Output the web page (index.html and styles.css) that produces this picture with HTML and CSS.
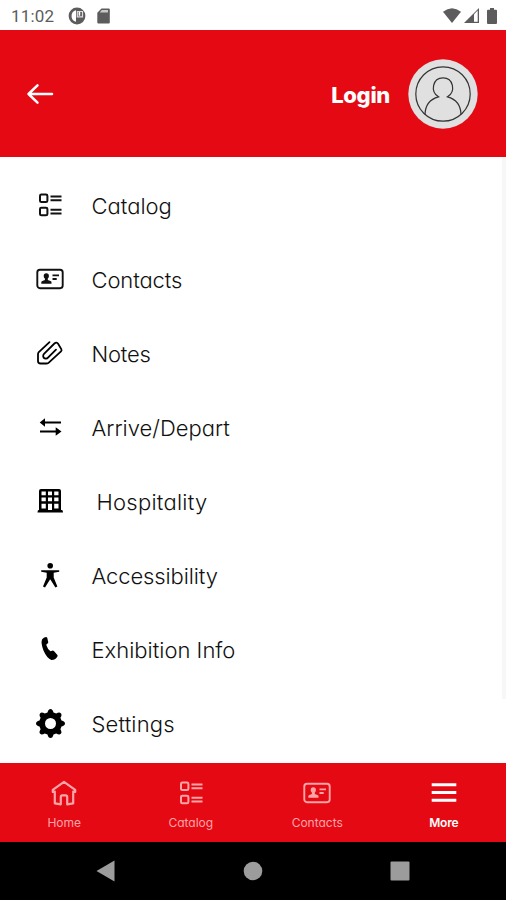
FILE: index.html
```html
<!DOCTYPE html>
<html lang="en">
<head>
<meta charset="utf-8">
<title>More</title>
<link rel="stylesheet" href="styles.css">
</head>
<body>
<svg class="defs" width="0" height="0" aria-hidden="true">
  <symbol id="catalog" viewBox="0 0 28 28">
    <g fill="none" stroke="currentColor" stroke-width="2">
      <rect x="4" y="3.5" width="7.400" height="7.600" rx="1.400"/>
      <rect x="4" y="16.700" width="7.400" height="7.600" rx="1.400"/>
      <path d="M14.500 5.500h11M14.500 9.300h11M14.500 18.700h11M14.500 22.500h11"/>
    </g>
  </symbol>
  <symbol id="card" viewBox="0 0 28 28">
    <rect x="1.300" y="4.800" width="25.400" height="18.400" rx="2.600" fill="none" stroke="currentColor" stroke-width="1.900"/>
    <path fill="currentColor" d="M7.700 10.800a2.600 2.600 0 0 1 5.200 0c0 1.300-.4 2.200-1.100 2.800v1.500l2.600.9c.9.3 1.100.8 1.100 1.600v1.200H5.300v-1.200c0-.8.3-1.300 1.100-1.600l2.500-.9v-1.500c-.8-.6-1.200-1.500-1.200-2.800z"/>
    <path d="M16.500 10.400H23M16.500 14h4.200" fill="none" stroke="currentColor" stroke-width="1.900"/>
  </symbol>
</svg>

<header class="status">
  <span class="clock">11:02</span>
  <svg class="status-disc" width="18" height="18" viewBox="0 0 18 18"><circle cx="9" cy="9" r="8.400" fill="#5c5c5c"/><path d="M8 3.200a6 6 0 0 0 0 11.600zM10.600 4.200h1.600v4.600h-1.600z" fill="#fff"/><path d="M9.300 4.500h5.200v5.300H9.300z" fill="none" stroke="#ddd" stroke-width="1.200"/></svg>
  <svg class="status-sd" width="13" height="16" viewBox="0 0 13 16"><path d="M4.500.5h7.200q1.100 0 1.100 1.100v12.800q0 1.100-1.100 1.100H1.400Q.3 15.500.3 14.400V4.800z" fill="#5c5c5c"/><path d="M4.800 2.100h6.200v2.300H2.700z" fill="#c8c8c8"/></svg>
  <div class="status-right">
    <svg width="18" height="15" viewBox="0 0 18 15"><path d="M9 15 0 3.700q9-7 18 0z" fill="#5c5c5c"/></svg>
    <svg width="15" height="15" viewBox="0 0 15 15"><path d="M15 0v15H0z" fill="#5c5c5c"/><path d="M10 6.300 13.700 2.600v11.100H10z" fill="#fff"/></svg>
    <svg class="battery" width="10" height="16" viewBox="0 0 10 16"><path d="M3 0h4v1.700h2q1 0 1 1V15q0 1-1 1H1q-1 0-1-1V2.700q0-1 1-1h2z" fill="#5c5c5c"/></svg>
  </div>
</header>

<section class="banner">
  <svg class="back" width="28" height="22" viewBox="0 0 28 22"><path d="M26 11H2.500M11.500 2.300 2.500 11l9 8.700" fill="none" stroke="#fff" stroke-width="2.500" stroke-linecap="round" stroke-linejoin="round"/></svg>
  <span class="login">Login</span>
  <svg class="avatar" width="70" height="70" viewBox="0 0 70 70">
    <circle cx="35" cy="35" r="34.700" fill="#e0e0e0"/>
    <g fill="none" stroke="#333" stroke-width="1.200"><circle cx="35" cy="35" r="27.200"/><path d="M17 55.500C17.200 46 22.500 40 30.500 37.800 22 32.500 24.500 18.800 35 18.800s13 13.700 4.500 19C47.500 40 52.800 46 53 55.500"/></g>
  </svg>
</section>

<main class="content">
  <ul class="menu">
    <li class="row"><svg class="icon"><use href="#catalog"/></svg><span class="t-catalog">Catalog</span></li>
    <li class="row"><svg class="icon"><use href="#card"/></svg><span class="t-contacts">Contacts</span></li>
    <li class="row"><svg class="icon" viewBox="0 0 28 28"><path d="M13.500 3.200 2.800 13.200q-.8.800-.8 2V22q0 2.500 2.500 2.500h6.300q1.200 0 2-.8L25 12.300q1-1 .3-2.200l-3.200-5.400q-1.500-2.200-3.700-.2L8 14.800q-1 1-.8 2.500.4 2.500 3 2.200 1 0 1.800-.9l8-8" fill="none" stroke="#000" stroke-width="1.800" stroke-linecap="round"/></svg><span class="t-notes">Notes</span></li>
    <li class="row"><svg class="icon" viewBox="0 0 28 28"><path d="M7 9.500h18M4 18.500H21" fill="none" stroke="#000" stroke-width="1.900"/><path d="M3.700 9.500 9 5.300v8.400zM25.500 18.500l-5.800-4.200v8.400z"/></svg><span class="t-arrive">Arrive/Depart</span></li>
    <li class="row"><svg class="icon" viewBox="0 0 28 28"><path fill-rule="evenodd" d="M5 2h18q2 0 2 2v19h1q1 0 1 2.500H1.500Q1.500 23 2.500 23H3V4q0-2 2-2zM5.500 4.500v3.800h4.300V4.500zM12 4.500v3.800h4V4.500zM18.200 4.500v3.800h4.300V4.500zM5.500 10.500v3.800h4.300v-3.800zM12 10.500v3.800h4v-3.800zM18.200 10.500v3.800h4.300v-3.800zM5.500 16.700v4.800h4.300v-4.800zM12 16.700V23h4v-6.300zM18.200 16.700v4.800h4.300v-4.800z"/></svg><span class="t-hospitality">Hospitality</span></li>
    <li class="row"><svg class="icon" viewBox="0 0 28 28"><circle cx="14.200" cy="4.700" r="2.800"/><path d="M5.200 9.200h18v1.600l-5.500 1v4.700l3.700 9-2 .9-5-8h-.4l-5 8-2-.9 3.700-9v-4.700l-5.500-1z"/></svg><span class="t-access">Accessibility</span></li>
    <li class="row"><svg class="icon" viewBox="0 0 28 28"><path d="M6 4.600q1.500-2.300 4-2.600 1 0 1.300 1l.9 4q.2 1-.7 1.600l-1.300 1.100q1.200 4.300 4.300 6.600l1.700-.6q1-.4 1.700.4l3.500 4q.6.900-.2 1.700-2 3.400-5.800 3.200Q11 23.500 7.500 15.500 4.700 8.500 6 4.600z"/></svg><span class="t-info">Exhibition Info</span></li>
    <li class="row"><svg class="icon gear" viewBox="-14.500 -14.500 29 29"><path fill-rule="evenodd" d="M-3-11Q-2.200-14.500 0-14.500T3-11L5.700-9.900Q8.700-11.800 10.300-10.300T9.900-5.700L11-3Q14.500-2.200 14.500 0T11 3L9.900 5.700Q11.800 8.700 10.300 10.300T5.700 9.900L3 11Q2.200 14.500 0 14.500T-3 11L-5.700 9.900Q-8.700 11.800-10.300 10.300T-9.900 5.700L-11 3Q-14.500 2.200-14.500 0T-11-3L-9.900-5.700Q-11.800-8.700-10.300-10.300T-5.700-9.900zM5.500 0a5.500 5.500 0 1 0-11 0 5.500 5.500 0 1 0 11 0z"/></svg><span class="t-settings">Settings</span></li>
  </ul>
  <div class="rail"></div>
</main>

<nav class="tabs">
  <a class="tab"><svg class="icon" viewBox="0 0 28 28"><path d="M2.800 13V10.800L14 2.800l11.200 8V13l-2-.5v11.800l-6 1v-7.500q0-1.500-1.500-1.500h-3.400q-1.500 0-1.500 1.500v7.500l-6-1V12.500z" fill="none" stroke="currentColor" stroke-width="2.200" stroke-linejoin="round"/></svg><span>Home</span></a>
  <a class="tab"><svg class="icon"><use href="#catalog"/></svg><span>Catalog</span></a>
  <a class="tab"><svg class="icon"><use href="#card"/></svg><span>Contacts</span></a>
  <a class="tab active"><svg class="icon" viewBox="0 0 28 28"><path d="M1.700 5.700h24.600M1.700 13.500h24.600M1.700 21.300h24.600" stroke="currentColor" stroke-width="3"/></svg><span>More</span></a>
</nav>

<footer class="system">
  <svg width="20" height="22" viewBox="0 0 20 22"><path d="M18.500.5v21L.5 11z" fill="#9c9c9c"/></svg>
  <svg width="20" height="20" viewBox="0 0 20 20"><circle cx="10" cy="10" r="9.300" fill="#9c9c9c"/></svg>
  <svg width="20" height="20" viewBox="0 0 20 20"><rect x=".5" y=".5" width="19" height="19" rx="1" fill="#9c9c9c"/></svg>
</footer>
</body>
</html>
```
FILE: styles.css
```css
* { box-sizing: border-box; }
body {
  margin: 0;
  width: 506px;
  height: 900px;
  display: flex;
  flex-direction: column;
  overflow: hidden;
  background: #fff;
  font-family: Inter, "Liberation Sans", sans-serif;
  font-feature-settings: "cv11";
}
svg { display: block; flex: none; }
.defs { position: absolute; }

.status {
  height: 30px;
  flex: none;
  display: flex;
  align-items: center;
  padding: 1px 9px 0 11px;
}
.clock {
  width: 57px;
  font: 17px/20px Roboto, sans-serif;
  letter-spacing: 0.2px;
  color: #5c5c5c;
}
.status-sd { margin-left: 11px; }
.status-right {
  display: flex;
  align-items: center;
  gap: 3px;
  margin-left: auto;
}
.battery { margin-left: 5px; }

.banner {
  height: 127px;
  flex: none;
  display: flex;
  align-items: center;
  padding: 0 28px 0 26px;
  background: #e50914;
}
.login {
  margin: 2px 18px 0 auto;
  color: #fff;
  font-size: 22px;
  font-weight: 800;
  letter-spacing: -0.3px;
}

.content {
  flex: none;
  height: 606px;
  display: flex;
}
.menu {
  flex: 1;
  margin: 0;
  padding: 11px 0 0 35.500px;
  list-style: none;
}
.row {
  height: 74px;
  display: flex;
  align-items: center;
  gap: 28px;
  color: #111;
  font-size: 22px;
  font-weight: 300;
  white-space: nowrap;
}
.row span { padding-top: 2px; }
.icon { width: 28px; height: 28px; }
.row .t-hospitality { padding-left: 5px; letter-spacing: 0.25px; }
.t-contacts, .t-access { letter-spacing: -0.12px; }
.t-notes { letter-spacing: -0.2px; }
.t-settings { letter-spacing: 0.15px; }
.gear { width: 29px; height: 29px; margin-right: -1px; }
.rail {
  width: 4px;
  height: 542px;
  background: #f7f7f7;
}

.tabs {
  height: 79px;
  flex: none;
  display: grid;
  grid-template-columns: repeat(4, 1fr);
  padding-left: 1px;
  margin-right: -1px;
  background: #e50914;
}
.tab {
  display: flex;
  flex-direction: column;
  align-items: center;
  gap: 8px;
  padding-top: 16px;
  color: #ffa5a8;
  font-size: 12px;
  line-height: 15px;
}
.active {
  color: #fff;
  font-weight: 600;
  letter-spacing: -0.2px;
}

.system {
  flex: 1;
  display: flex;
  align-items: center;
  justify-content: space-between;
  padding: 0 96px;
  background: #000;
}
```
